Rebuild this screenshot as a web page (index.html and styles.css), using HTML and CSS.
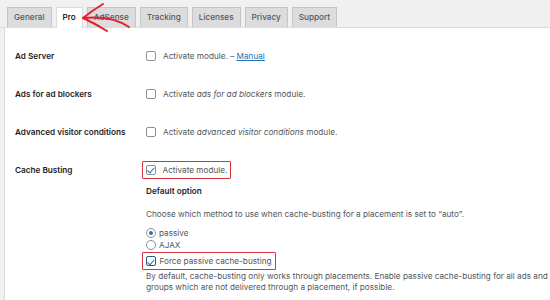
FILE: index.html
```html
<!DOCTYPE html>
<html lang="en">

<head>
    <meta charset="UTF-8">
    <meta name="viewport" content="width=device-width, initial-scale=1.0">
    <title>Advanced Ads - Pro</title>
    <link rel="stylesheet" href="styles.css">
</head>

<body>
<div class="tabs">
    <span class="tab">General</span>
    <span class="tab active">Pro</span>
    <span class="tab">AdSense</span>
    <span class="tab">Tracking</span>
    <span class="tab">Licenses</span>
    <span class="tab">Privacy</span>
    <span class="tab">Support</span>
</div>

<svg class="arrow" width="140" height="40" viewBox="0 0 140 40">
    <path d="M129 27 Q112 15 83 18" />
    <path d="M83 18 Q93 10 103 4" />
    <path d="M83 18 Q96 24 107 31" />
</svg>

<div class="panel">
    <div class="row">
        <div class="label">Ad Server</div>
        <div class="field">
            <label class="check"><span class="box"></span><span>Activate module. &ndash; <a href="#">Manual</a></span></label>
        </div>
    </div>
    <div class="row">
        <div class="label">Ads for ad blockers</div>
        <div class="field">
            <label class="check"><span class="box"></span><span>Activate <em>ads for ad blockers</em> module.</span></label>
        </div>
    </div>
    <div class="row">
        <div class="label">Advanced visitor conditions</div>
        <div class="field">
            <label class="check"><span class="box"></span><span>Activate <em>advanced visitor conditions</em> module.</span></label>
        </div>
    </div>
    <div class="row">
        <div class="label">Cache Busting</div>
        <div class="field">
            <label class="check marked"><span class="box on"></span><span>Activate module.</span></label>
            <div class="subhead">Default option</div>
            <p class="desc">Choose which method to use when cache-busting for a placement is set to &ldquo;auto&rdquo;.</p>
            <label class="radio first"><span class="dot on"></span><span>passive</span></label>
            <label class="radio"><span class="dot"></span><span>AJAX</span></label>
            <label class="check marked tight"><span class="box on"></span><span>Force passive cache-busting</span></label>
            <p class="desc note">By default, cache-busting only works through placements. Enable passive cache-busting for all ads and groups which are not delivered through a placement, if possible.</p>
        </div>
    </div>
</div>
</body>

</html>
```

FILE: styles.css
```css
* {
    box-sizing: border-box;
}

body,
html {
    margin: 0;
    padding: 0;
    width: 550px;
    height: 300px;
    overflow: hidden;
    background-color: #f0f0f1;
    font-family: Inter, "Liberation Sans", sans-serif;
    font-size: 8.2px;
    color: #50575e;
}

.tabs {
    display: flex;
    gap: 4px;
    padding: 7px 0 0 7px;
    height: 28px;
    border-bottom: 1px solid #dcdcde;
}

.tab {
    height: 20px;
    line-height: 19px;
    padding: 0 6px;
    background-color: #dcdcde;
    border: 1px solid #c3c4c7;
    border-bottom: none;
    font-weight: 500;
    font-size: 8.2px;
    color: #50575e;
}

.tab.active {
    background-color: #fff;
    color: #000;
    height: 21px;
    border-color: #dcdcde;
}

.arrow {
    position: absolute;
    left: 0;
    top: 0;
    fill: none;
    stroke: #e4202c;
    stroke-width: 2;
    stroke-linecap: round;
}

.panel {
    background-color: #fff;
    margin-left: 4px;
    border-left: 1px solid #dcdcde;
    height: 272px;
    overflow: hidden;
    padding: 21px 0 0 10px;
    display: flex;
    flex-direction: column;
    gap: 24px;
}

.row {
    display: flex;
    line-height: 14px;
}

.label {
    width: 131px;
    flex-shrink: 0;
    font-weight: 600;
    color: #1d2327;
}

.field {
    display: flex;
    flex-direction: column;
    align-items: flex-start;
}

.check,
.radio {
    display: flex;
    align-items: center;
}

.box {
    width: 10px;
    height: 10px;
    border: 1px solid #8c8f94;
    border-radius: 2px;
    margin-right: 7px;
    position: relative;
    flex-shrink: 0;
}

.box.on::after {
    content: "";
    position: absolute;
    left: 2.5px;
    top: 0.5px;
    width: 3px;
    height: 5.5px;
    border: solid #2271b1;
    border-width: 0 1.3px 1.3px 0;
    transform: rotate(40deg);
    box-sizing: content-box;
}

.marked {
    border: 1.5px solid #d9313d;
    border-radius: 1px;
    padding: 1px 3px 1px 2.5px;
    margin: -2.5px 0 -2.5px -4px;
}

.tight .box {
    margin-right: 4px;
    border-color: #2c5a8c;
}

.subhead {
    font-weight: 600;
    color: #1d2327;
    margin-top: 8px;
}

.desc {
    margin: 9px 0 0;
}

.radio {
    line-height: 12px;
}

.radio.first {
    margin-top: 6px;
}

.dot {
    width: 10px;
    height: 10px;
    border: 1px solid #8c8f94;
    border-radius: 50%;
    margin-right: 3px;
    position: relative;
}

.dot.on::after {
    content: "";
    position: absolute;
    left: 2px;
    top: 2px;
    width: 4px;
    height: 4px;
    border-radius: 50%;
    background-color: #2271b1;
}

.tight {
    margin-top: 1px;
}

.note {
    margin-top: 3px;
    line-height: 11.5px;
    width: 404px;
}

a {
    color: #2271b1;
}

em {
    font-style: italic;
}
```
